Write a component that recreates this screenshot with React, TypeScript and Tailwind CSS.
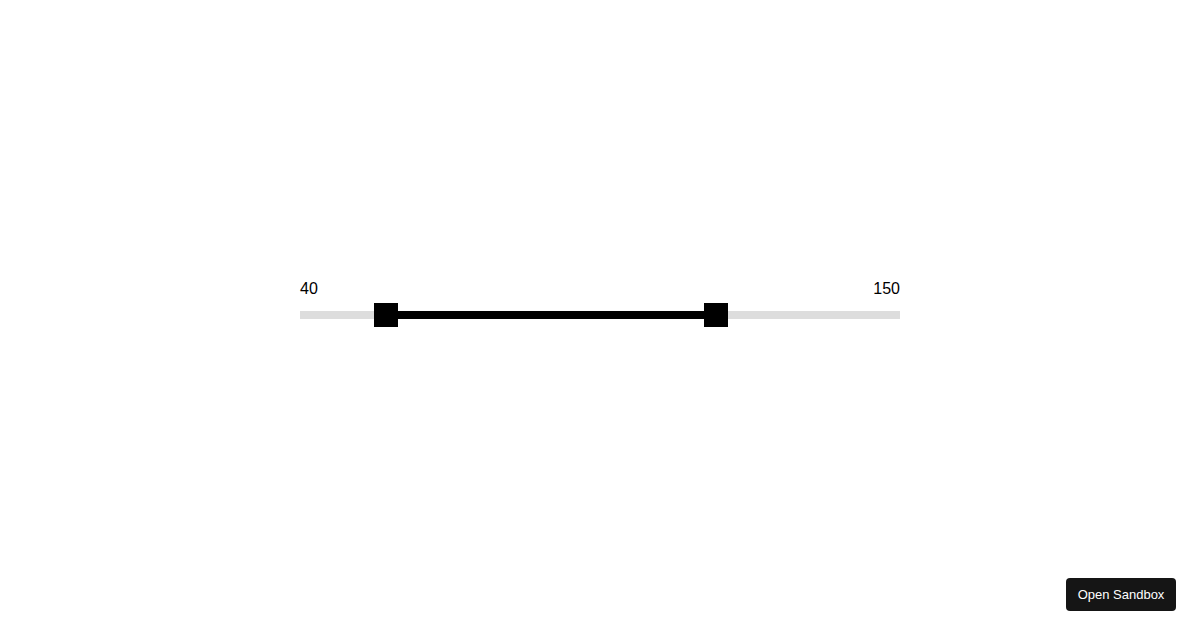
export default function App() {
    const min = 40;
    const max = 150;
    // thumb positions as fractions of the track
    const lo = 0.1433;
    const hi = 0.6933;

    return (
        <div className="relative h-[630px] w-[1200px] bg-white font-['Liberation_Sans',Arial,sans-serif]">
            <div className="flex h-full items-center justify-center">
                <div className="w-[600px] pb-[35px]">
                    <div className="flex justify-between text-base leading-6 text-black">
                        <span>{min}</span>
                        <span>{max}</span>
                    </div>
                    <div className="relative mt-[10px] h-2 bg-[#dddddd]">
                        <div
                            className="absolute top-0 h-2 bg-black"
                            style={{ left: `${lo * 100}%`, width: `${(hi - lo) * 100}%` }}
                        />
                        <div
                            className="absolute top-[-8px] h-6 w-6 -translate-x-1/2 bg-black"
                            style={{ left: `${lo * 100}%` }}
                        />
                        <div
                            className="absolute top-[-8px] h-6 w-6 -translate-x-1/2 bg-black"
                            style={{ left: `${hi * 100}%` }}
                        />
                    </div>
                </div>
            </div>
            <button className="absolute bottom-[19px] right-[24px] h-[33px] w-[110px] rounded-[4px] bg-[#151515] text-[13px] text-white">
                Open Sandbox
            </button>
        </div>
    );
}
